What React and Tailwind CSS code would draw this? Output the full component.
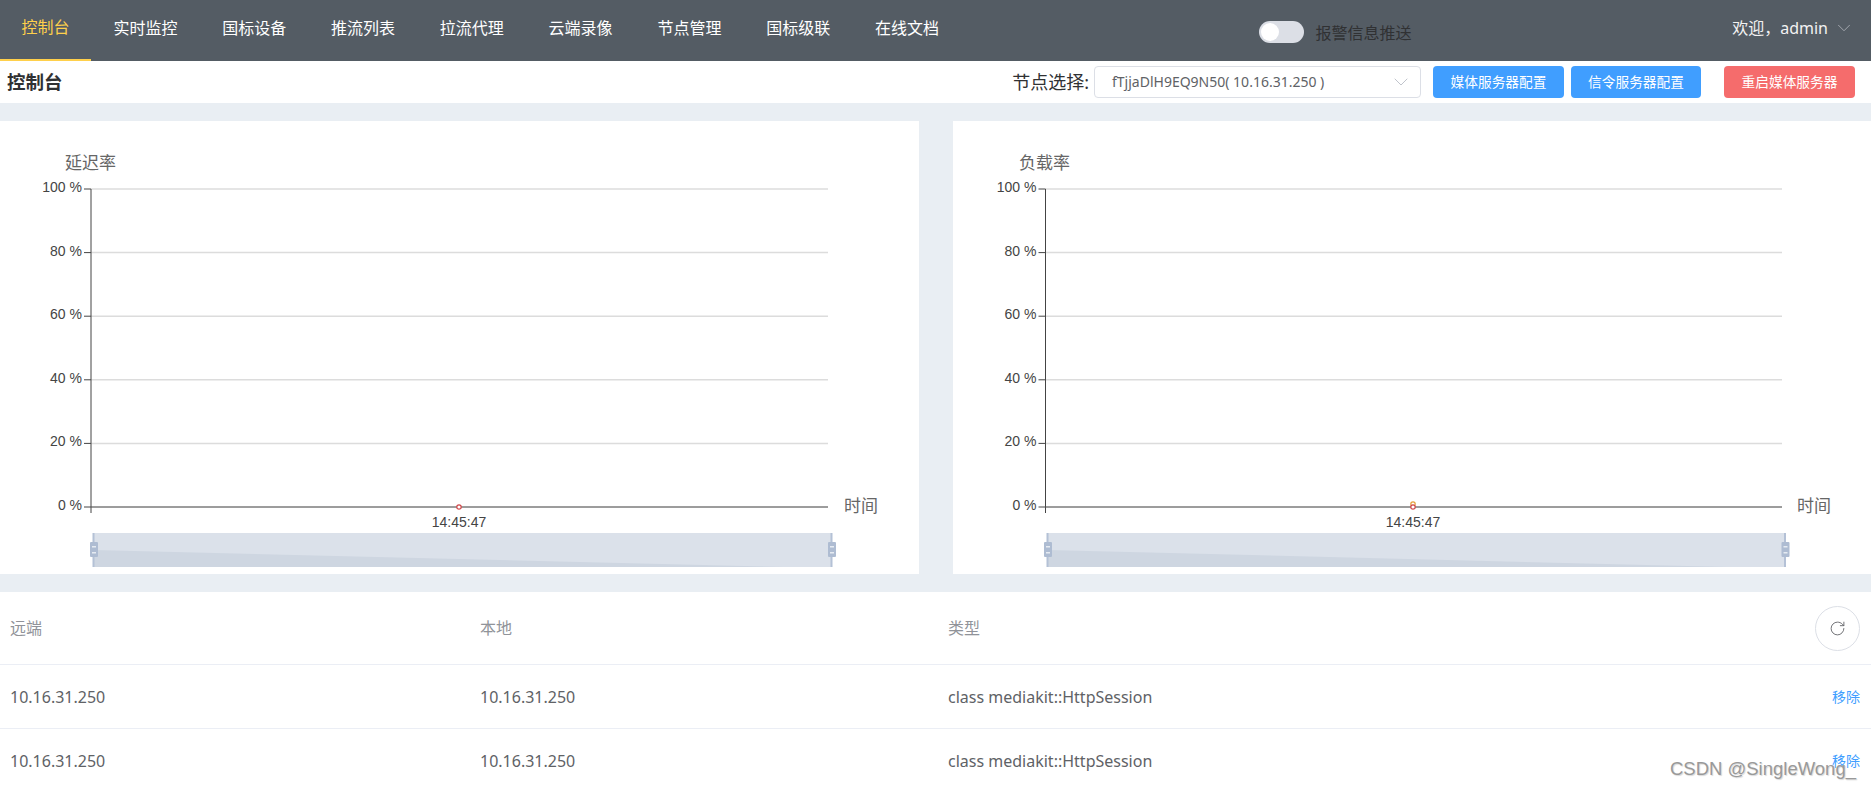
import React from 'react';
import { ChevronDown, RotateCw } from 'lucide-react';

const tabs = ['控制台', '实时监控', '国标设备', '推流列表', '拉流代理', '云端录像', '节点管理', '国标级联', '在线文档'];
const ticks = [
    { label: '100 %', y: 68 },
    { label: '80 %', y: 131.6 },
    { label: '60 %', y: 195.2 },
    { label: '40 %', y: 258.8 },
    { label: '20 %', y: 322.4 },
    { label: '0 %', y: 386 },
];
const rows = ['row-a', 'row-b'];

const Handle = ({ x }) => (
    <g>
        <rect x={x - 1} y="412" width="2" height="34" fill="#b4c1d6" />
        <rect x={x - 3.5} y="421" width="8" height="15" rx="1" fill="#aebcd2" />
        <rect x={x - 1.5} y="425" width="4" height="1.5" fill="#e6ebf2" />
        <rect x={x - 1.5} y="431" width="4" height="1.5" fill="#e6ebf2" />
    </g>
);

const Chart = ({ title, titleX, axisX, endX, timeX, dotX, zoomStart, zoomEnd, shadowEnd, double }) => (
    <svg className="block h-full w-full font-['Liberation_Sans','Noto_Sans_CJK_SC',sans-serif]">
        <text x={titleX} y="47.5" fontSize="17" fill="#666">{title}</text>
        {ticks.map((t) => (
            <g key={t.label}>
                <line x1={axisX} x2={endX} y1={t.y} y2={t.y} stroke="#dcdcdc" strokeWidth="1.5" />
                <line x1={axisX - 7} x2={axisX} y1={t.y} y2={t.y} stroke="#444" />
                <text x={axisX - 9} y={t.y + 3} fontSize="14" textAnchor="end" fill="#444">{t.label}</text>
            </g>
        ))}
        <line x1={axisX} x2={axisX} y1="68" y2="392" stroke="#444" />
        <line x1={axisX} x2={endX} y1="386" y2="386" stroke="#555" />
        <text x={timeX} y="390.5" fontSize="17" fill="#666">时间</text>
        <text x={dotX} y="406" fontSize="14" textAnchor="middle" fill="#444">14:45:47</text>
        {double && <circle cx={dotX} cy="383" r="2.2" fill="#fff" stroke="#e6a23c" strokeWidth="1.2" />}
        <circle cx={dotX} cy="386" r="2.2" fill="#fff" stroke="#d0484a" strokeWidth="1.2" />
        <rect x={zoomStart} y="412" width={zoomEnd - zoomStart} height="34" fill="#dbe1ea" />
        <polygon points={`${zoomStart},429 ${shadowEnd},446 ${zoomStart},446`} fill="#ced6e1" />
        <Handle x={zoomStart} />
        <Handle x={zoomEnd} />
    </svg>
);

const App = () => {
    return (
        <div className="relative h-screen overflow-hidden bg-white font-['Noto_Sans','Noto_Sans_CJK_SC',sans-serif]">
            {/* Top menu */}
            <div className="flex h-[61px] items-start bg-[#545c64] text-white">
                {tabs.map((tab, i) => (
                    <div
                        key={tab}
                        className={
                            i === 0
                                ? 'flex h-[61px] items-center border-b-2 border-[#ffd04b] px-[21.5px] pb-[5px] text-base text-[#ffd04b]'
                                : 'flex h-[61px] items-center px-[22.4px] pb-[5px] text-base text-white'
                        }
                    >
                        {tab}
                    </div>
                ))}
                <div className="ml-[298px] mt-[18px] flex items-center">
                    <div className="flex h-[22px] w-[45px] items-center rounded-full bg-[#dcdfe6] pl-[2px]">
                        <div className="h-[18px] w-[18px] rounded-full bg-white" />
                    </div>
                    <span className="ml-[11px] mt-[3px] text-base text-[#303133]">报警信息推送</span>
                </div>
                <div className="ml-auto mr-[16px] flex h-[56px] items-center text-base text-[#f2f2f2]">
                    <span>欢迎，admin</span>
                    <ChevronDown className="ml-[5px] text-[#a8adb3]" size={22} strokeWidth={1} />
                </div>
            </div>

            {/* Toolbar */}
            <div className="flex h-[42px] items-center pr-[16px]">
                <span className="pl-[7px] text-[18.5px] font-bold text-[#303133]">控制台</span>
                <span className="ml-auto text-lg text-[#303133]">节点选择:</span>
                <div className="ml-[5px] flex h-[32px] w-[327px] items-center justify-between rounded border border-[#dcdfe6] pl-[17px] pr-[7px] text-sm text-[#606266]">
                    <span>fTjjaDlH9EQ9N50( 10.16.31.250 )</span>
                    <ChevronDown className="text-[#c0c4cc]" size={24} strokeWidth={1} />
                </div>
                <button className="ml-[12px] h-[32px] w-[131px] rounded bg-[#409eff] text-[13.7px] text-white">媒体服务器配置</button>
                <button className="ml-[7px] h-[32px] w-[130px] rounded bg-[#409eff] text-[13.7px] text-white">信令服务器配置</button>
                <button className="ml-[23px] h-[32px] w-[131px] rounded bg-[#f56c6c] text-[13.7px] text-white">重启媒体服务器</button>
            </div>

            {/* Charts */}
            <div className="flex h-[489px] gap-[34px] bg-[#e9eef3] pb-[18px] pt-[18px]">
                <div className="h-[453px] w-[919px] bg-white">
                    <Chart title="延迟率" titleX={65} axisX={91} endX={828} timeX={844} dotX={459} zoomStart={93.5} zoomEnd={831.5} shadowEnd={784} />
                </div>
                <div className="h-[453px] flex-1 bg-white">
                    <Chart title="负载率" titleX={66} axisX={92.5} endX={829} timeX={844} dotX={460} zoomStart={94.5} zoomEnd={832} shadowEnd={775} double />
                </div>
            </div>

            {/* Session table */}
            <div className="grid h-[73px] grid-cols-[470px_468px_1fr_auto] items-center border-b border-[#ebeef5] pl-[10px] pr-[11px] text-base text-[#909399]">
                <span>远端</span>
                <span>本地</span>
                <span>类型</span>
                <div className="flex h-[45px] w-[45px] items-center justify-center rounded-full border border-[#dcdfe6] text-[#606266]">
                    <RotateCw size={17} strokeWidth={1.25} />
                </div>
            </div>
            {rows.map((row) => (
                <div key={row} className="grid h-[64px] grid-cols-[470px_468px_1fr_auto] items-center border-b border-[#ebeef5] pl-[10px] pr-[11px] text-base text-[#606266]">
                    <span>10.16.31.250</span>
                    <span>10.16.31.250</span>
                    <span>class mediakit::HttpSession</span>
                    <span className="text-sm text-[#409eff]">移除</span>
                </div>
            ))}

            {/* Watermark */}
            <div className="absolute right-[15px] top-[756px] font-['Liberation_Sans',sans-serif] text-[18.5px] leading-[26px] text-[#999999] [text-shadow:1px_1px_1px_#d8d8d8]">
                CSDN @SingleWong_
            </div>
        </div>
    );
};

export default App;
